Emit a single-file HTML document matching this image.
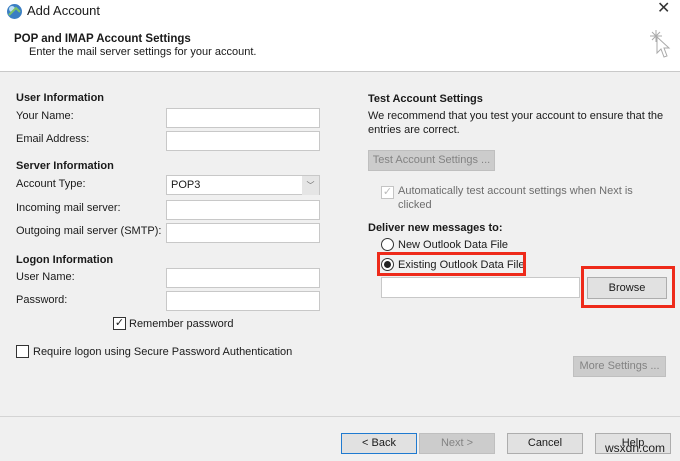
<!DOCTYPE html>
<html><head><style>
*{margin:0;padding:0;box-sizing:border-box}
body{width:680px;height:461px;background:#f0f0f0;font-family:"Liberation Sans",sans-serif;font-size:11px;color:#1a1a1a;position:relative;overflow:hidden}
.a{position:absolute;white-space:nowrap;line-height:14px}
.b{font-weight:bold}
.in{position:absolute;background:#fff;border:1px solid #c8c8c8;height:20px}
.btn{position:absolute;background:#e1e1e1;border:1px solid #adadad;height:21px;text-align:center;line-height:19px}
.dis{background:#cccccc;border-color:#bfbfbf;color:#838383}
.cb{position:absolute;width:13px;height:13px;border:1px solid #333;background:#fff}
.red{position:absolute;border:3px solid #ee2a1a}
</style></head><body>
<div style="position:absolute;left:0;top:0;width:680px;height:72px;background:#fff;border-bottom:1px solid #c9c9c9"></div>
<svg class="a" style="left:6px;top:3px" width="17" height="17"><circle cx="8.5" cy="8.5" r="7.5" fill="#3b7fc4"/><circle cx="6" cy="6" r="3" fill="#bfe0f5"/><path d="M3 12 L10 5 L14 9" stroke="#7cc36a" stroke-width="2" fill="none"/></svg>
<div class="a" style="left:27px;top:4px;font-size:13px">Add Account</div>
<div class="a" style="left:657px;top:2px;font-size:16px;color:#333">✕</div>
<svg class="a" style="left:648px;top:28px" width="28" height="36"><g stroke="#aaa" stroke-width="1"><path d="M8 2v12M2 8h12M4 4l8 8M12 4l-8 8"/><path d="M9 9 L9 25 L13 21 L16 29 L19 28 L16 20 L21 20 Z" fill="#fff"/></g></svg>
<div class="a b" style="left:14px;top:32px;font-size:11.5px">POP and IMAP Account Settings</div>
<div class="a" style="left:29px;top:45px">Enter the mail server settings for your account.</div>

<div class="a b" style="left:16px;top:91px">User Information</div>
<div class="a" style="left:16px;top:109px">Your Name:</div>
<div class="in" style="left:166px;top:108px;width:154px"></div>
<div class="a" style="left:16px;top:132px">Email Address:</div>
<div class="in" style="left:166px;top:131px;width:154px"></div>
<div class="a b" style="left:16px;top:159px">Server Information</div>
<div class="a" style="left:16px;top:177px">Account Type:</div>
<div class="in" style="left:166px;top:175px;width:154px;padding:3px 0 0 4px">POP3</div>
<div style="position:absolute;left:302px;top:176px;width:17px;height:19px;background:#e5e5e5;color:#666;font-size:8px;text-align:center;line-height:19px">﹀</div>
<div class="a" style="left:16px;top:201px">Incoming mail server:</div>
<div class="in" style="left:166px;top:200px;width:154px"></div>
<div class="a" style="left:16px;top:224px">Outgoing mail server (SMTP):</div>
<div class="in" style="left:166px;top:223px;width:154px"></div>
<div class="a b" style="left:16px;top:253px">Logon Information</div>
<div class="a" style="left:16px;top:270px">User Name:</div>
<div class="in" style="left:166px;top:268px;width:154px"></div>
<div class="a" style="left:16px;top:293px">Password:</div>
<div class="in" style="left:166px;top:291px;width:154px"></div>
<div class="cb" style="left:113px;top:317px;font-size:11px;line-height:11px;text-align:center">✓</div>
<div class="a" style="left:129px;top:317px">Remember password</div>
<div class="cb" style="left:16px;top:345px"></div>
<div class="a" style="left:33px;top:345px">Require logon using Secure Password Authentication</div>

<div class="a b" style="left:368px;top:92px">Test Account Settings</div>
<div class="a" style="left:368px;top:109px">We recommend that you test your account to ensure that the</div>
<div class="a" style="left:368px;top:123px">entries are correct.</div>
<div class="btn dis" style="left:368px;top:150px;width:127px">Test Account Settings ...</div>
<div class="cb" style="left:381px;top:186px;border-color:#c4c4c4;color:#bbb;font-size:11px;line-height:11px;text-align:center">✓</div>
<div class="a" style="left:398px;top:184px;color:#6d6d6d">Automatically test account settings when Next is</div>
<div class="a" style="left:398px;top:198px;color:#6d6d6d">clicked</div>
<div class="a b" style="left:368px;top:221px">Deliver new messages to:</div>
<div style="position:absolute;left:381px;top:238px;width:13px;height:13px;border:1px solid #333;border-radius:50%;background:#fff"></div>
<div class="a" style="left:398px;top:238px">New Outlook Data File</div>
<div style="position:absolute;left:381px;top:258px;width:13px;height:13px;border:1px solid #333;border-radius:50%;background:#fff"><div style="margin:2px;width:7px;height:7px;border-radius:50%;background:#222"></div></div>
<div class="a" style="left:398px;top:258px">Existing Outlook Data File</div>
<div class="red" style="left:377px;top:252px;width:149px;height:24px"></div>
<div class="in" style="left:381px;top:277px;width:199px;height:21px"></div>
<div class="btn" style="left:587px;top:277px;width:80px;height:22px;line-height:20px">Browse</div>
<div class="red" style="left:581px;top:266px;width:94px;height:42px"></div>
<div class="btn dis" style="left:573px;top:356px;width:93px">More Settings ...</div>

<div style="position:absolute;left:0;top:416px;width:680px;height:1px;background:#d4d4d4"></div>
<div class="btn" style="left:341px;top:433px;width:76px;border:1px solid #1f7ad0">&lt; Back</div>
<div class="btn dis" style="left:419px;top:433px;width:76px">Next &gt;</div>
<div class="btn" style="left:507px;top:433px;width:76px">Cancel</div>
<div class="btn" style="left:595px;top:433px;width:76px">Help</div>
<div class="a" style="left:605px;top:441px;font-size:12px;color:#222">wsxdn.com</div>
</body></html>
